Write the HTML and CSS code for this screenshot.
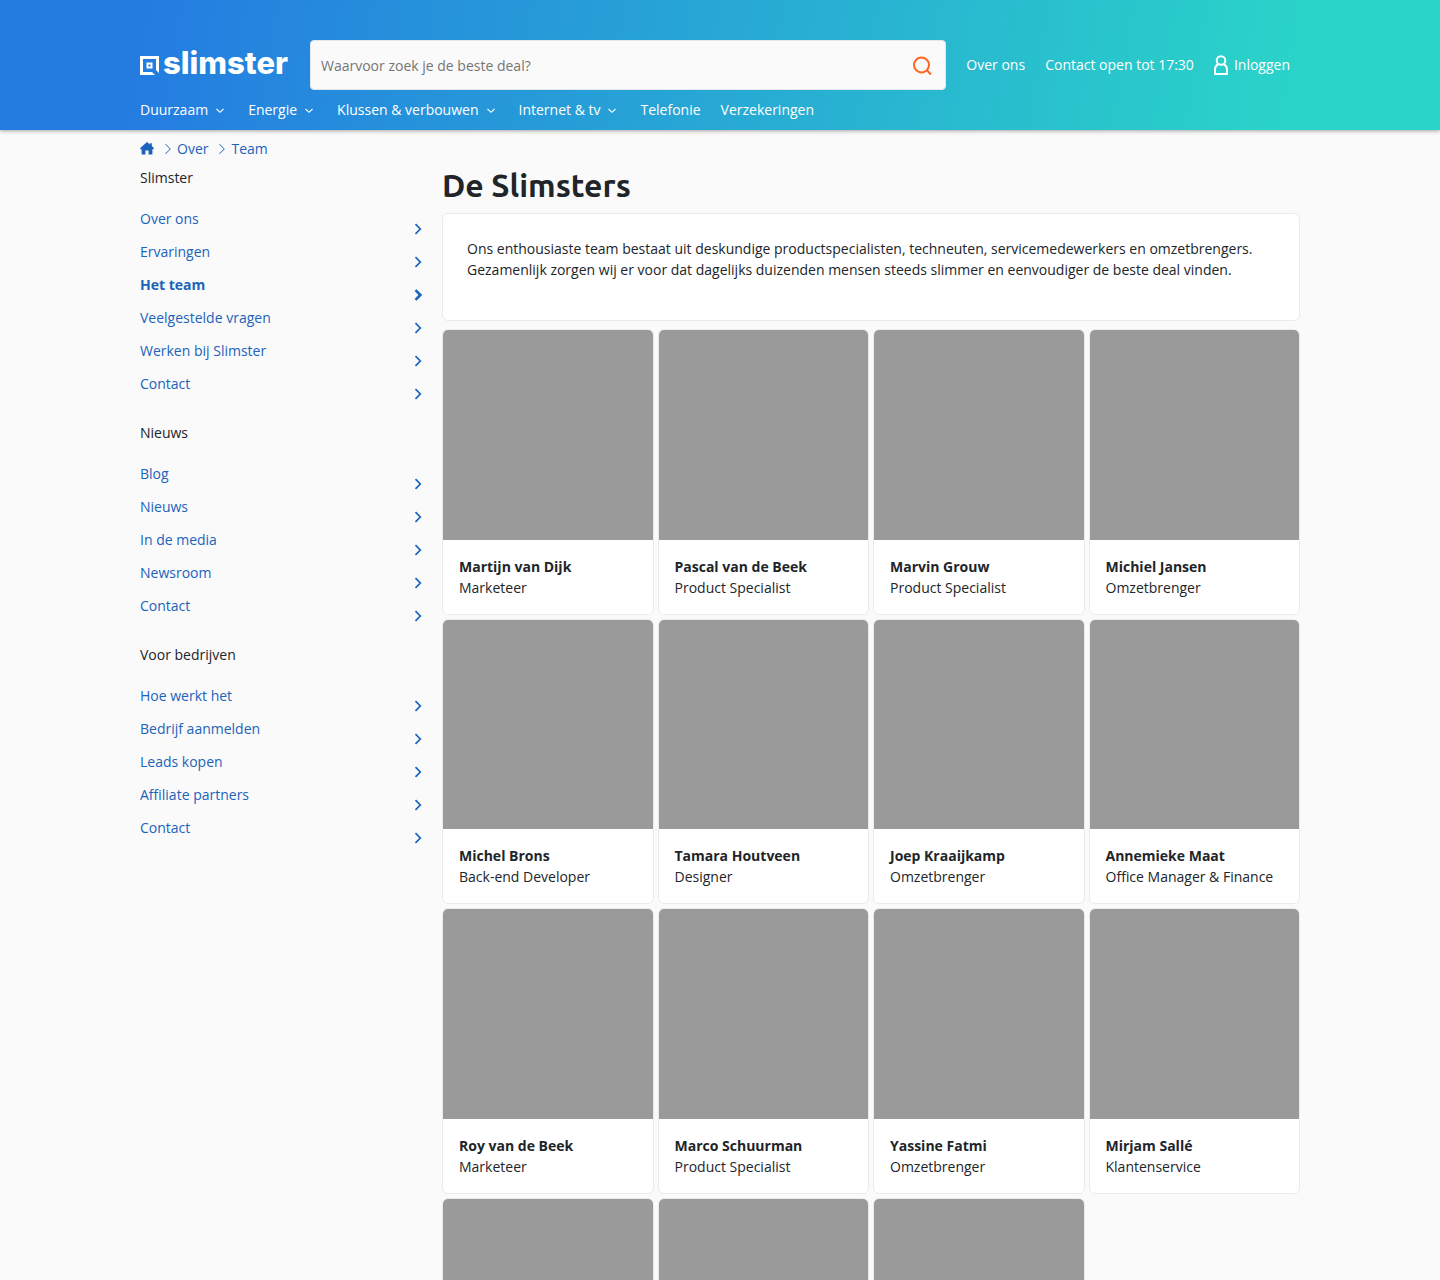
FILE: index.html
```html
<!DOCTYPE html>
<html lang="nl">
<head>
<meta charset="utf-8">
<meta name="viewport" content="width=device-width, initial-scale=1">
<title>De Slimsters</title>
<link rel="stylesheet" href="styles.css">
</head>
<body>
<svg class="sprite" aria-hidden="true">
  <symbol id="down" viewBox="0 0 8 8"><path d="M.5 2 4 5.300l3.500-3.300" fill="none" stroke="currentColor" stroke-width="1.100"/></symbol>
  <symbol id="right" viewBox="0 0 8 12"><path d="m1.500 1.200 4.800 4.800-4.800 4.800" fill="none" stroke="currentColor" stroke-width="var(--chevron-weight, 1.700)"/></symbol>
  <symbol id="crumb" viewBox="0 0 8 12"><path d="m1.500 1.200 4.800 4.800-4.800 4.800" fill="none" stroke="currentColor" stroke-width="1"/></symbol>
</svg>
<header class="header">
  <div class="container">
    <div class="topbar">
      <a class="logo" href="#" aria-label="Slimster">
        <svg class="logo-mark" viewBox="0 0 19 19" aria-hidden="true"><path fill="#fff" fill-rule="evenodd" d="M0 0h19v17l-3-3V3H3v13h9l3 3H0zM6.500 6.500h6v6h-6zM8.500 8.500v2h2v-2z"/></svg>
        <span class="logo-word">slimster</span>
      </a>
      <form class="search" role="search">
        <input class="search-input" type="search" placeholder="Waarvoor zoek je de beste deal?" aria-label="Zoeken">
        <button class="search-button" type="button" aria-label="Zoek">
          <svg viewBox="-.5 -1 20 20" width="20" height="20"><circle cx="9" cy="9" r="7.500" fill="none" stroke="#ff6420" stroke-width="2"/><path d="m14.300 14.300 4.200 4.200" stroke="#ff6420" stroke-width="2"/></svg>
        </button>
      </form>
      <nav class="user-links" aria-label="Service">
        <a href="#">Over ons</a>
        <a href="#">Contact open tot 17:30</a>
        <a class="login" href="#"><svg viewBox="0 0 14 20" width="14" height="20" aria-hidden="true"><g fill="none" stroke="#fff" stroke-width="2"><circle cx="7" cy="5.500" r="4.300"/><path d="M4 9.400C2 10.500 1 12.300 1 14.500V19h12v-4.500c0-2.200-1-4-3-5.100"/></g></svg>Inloggen</a>
      </nav>
    </div>
    <nav class="menu" aria-label="Hoofdmenu">
      <a href="#">Duurzaam<svg><use href="#down"/></svg></a>
      <a href="#">Energie<svg><use href="#down"/></svg></a>
      <a href="#">Klussen &amp; verbouwen<svg><use href="#down"/></svg></a>
      <a href="#">Internet &amp; tv<svg><use href="#down"/></svg></a>
      <a href="#">Telefonie</a>
      <a href="#">Verzekeringen</a>
    </nav>
  </div>
</header>
<div class="container">
  <nav class="breadcrumb" aria-label="Kruimelpad">
    <a href="#" aria-label="Home"><svg class="home" viewBox="0 0 14 14"><path fill="currentColor" d="M7 0 9.800 2.400V1.300h2v2.800L14 6.300l-.7.900H12.400V12.500H8.600V8.500H5.400v4H1.600V7.200H.7L0 6.300z"/></svg></a>
    <svg class="crumb-arrow"><use href="#crumb"/></svg>
    <a href="#">Over</a>
    <svg class="crumb-arrow"><use href="#crumb"/></svg>
    <a href="#">Team</a>
  </nav>
  <div class="layout">
    <aside class="sidebar">
      <section>
        <h2>Slimster</h2>
        <ul>
          <li><a href="#">Over ons<svg><use href="#right"/></svg></a></li>
          <li><a href="#">Ervaringen<svg><use href="#right"/></svg></a></li>
          <li><a class="active" href="#" aria-current="page">Het team<svg><use href="#right"/></svg></a></li>
          <li><a href="#">Veelgestelde vragen<svg><use href="#right"/></svg></a></li>
          <li><a href="#">Werken bij Slimster<svg><use href="#right"/></svg></a></li>
          <li><a href="#">Contact<svg><use href="#right"/></svg></a></li>
        </ul>
      </section>
      <section>
        <h2>Nieuws</h2>
        <ul>
          <li><a href="#">Blog<svg><use href="#right"/></svg></a></li>
          <li><a href="#">Nieuws<svg><use href="#right"/></svg></a></li>
          <li><a href="#">In de media<svg><use href="#right"/></svg></a></li>
          <li><a href="#">Newsroom<svg><use href="#right"/></svg></a></li>
          <li><a href="#">Contact<svg><use href="#right"/></svg></a></li>
        </ul>
      </section>
      <section>
        <h2>Voor bedrijven</h2>
        <ul>
          <li><a href="#">Hoe werkt het<svg><use href="#right"/></svg></a></li>
          <li><a href="#">Bedrijf aanmelden<svg><use href="#right"/></svg></a></li>
          <li><a href="#">Leads kopen<svg><use href="#right"/></svg></a></li>
          <li><a href="#">Affiliate partners<svg><use href="#right"/></svg></a></li>
          <li><a href="#">Contact<svg><use href="#right"/></svg></a></li>
        </ul>
      </section>
    </aside>
    <main>
      <h1>De Slimsters</h1>
      <div class="intro"><p>Ons enthousiaste team bestaat uit deskundige productspecialisten, techneuten, servicemedewerkers en omzetbrengers. Gezamenlijk zorgen wij er voor dat dagelijks duizenden mensen steeds slimmer en eenvoudiger de beste deal vinden.</p></div>
      <div class="team">
        <article class="card"><div class="photo"></div><div class="info"><h3>Martijn van Dijk</h3><p>Marketeer</p></div></article>
        <article class="card"><div class="photo"></div><div class="info"><h3>Pascal van de Beek</h3><p>Product Specialist</p></div></article>
        <article class="card"><div class="photo"></div><div class="info"><h3>Marvin Grouw</h3><p>Product Specialist</p></div></article>
        <article class="card"><div class="photo"></div><div class="info"><h3>Michiel Jansen</h3><p>Omzetbrenger</p></div></article>
        <article class="card"><div class="photo"></div><div class="info"><h3>Michel Brons</h3><p>Back-end Developer</p></div></article>
        <article class="card"><div class="photo"></div><div class="info"><h3>Tamara Houtveen</h3><p>Designer</p></div></article>
        <article class="card"><div class="photo"></div><div class="info"><h3>Joep Kraaijkamp</h3><p>Omzetbrenger</p></div></article>
        <article class="card"><div class="photo"></div><div class="info"><h3>Annemieke Maat</h3><p>Office Manager &amp; Finance</p></div></article>
        <article class="card"><div class="photo"></div><div class="info"><h3>Roy van de Beek</h3><p>Marketeer</p></div></article>
        <article class="card"><div class="photo"></div><div class="info"><h3>Marco Schuurman</h3><p>Product Specialist</p></div></article>
        <article class="card"><div class="photo"></div><div class="info"><h3>Yassine Fatmi</h3><p>Omzetbrenger</p></div></article>
        <article class="card"><div class="photo"></div><div class="info"><h3>Mirjam Sallé</h3><p>Klantenservice</p></div></article>
        <article class="card"><div class="photo"></div></article>
        <article class="card"><div class="photo"></div></article>
        <article class="card"><div class="photo"></div></article>
      </div>
    </main>
  </div>
</div>
</body>
</html>
```
FILE: styles.css
```css
* { box-sizing: border-box; }
body {
  margin: 0;
  background: #fafafa;
  color: #212529;
  font: 14px/21px "Open Sans", "Noto Sans", sans-serif;
}
h1, h2, h3, p, ul { margin: 0; padding: 0; }
ul { list-style: none; }
a { color: #1b63bb; text-decoration: none; }
.sprite { display: none; }
.container { max-width: 1160px; margin: 0 auto; }

.header {
  padding-top: 40px;
  background: linear-gradient(100deg, #247ce1 10%, #2ad4c8 90%);
  box-shadow: 0 1px 4px rgba(0, 0, 0, .35);
}
.header a { color: #fff; }
.topbar { display: flex; align-items: center; gap: 20px; padding-right: 10px; }
.logo { display: flex; align-items: flex-end; gap: 4px; width: 150px; height: 20px; }
.logo-mark { flex: none; width: 19px; height: 19px; }
.logo-word { font: 800 31px/24px "Inter", sans-serif; }
.search {
  flex: 1;
  display: flex;
  height: 50px;
  border: 1px solid #e4e7ea;
  border-radius: 4px;
  background: #fafafa;
}
.search-input {
  flex: 1;
  min-width: 0;
  padding: 0 10px;
  border: 0;
  background: transparent;
  color: #212529;
  font: inherit;
}
.search-input::placeholder { color: #757575; }
.search-button { display: flex; align-items: center; padding: 0 13px; border: 0; background: transparent; }
.user-links { display: flex; gap: 20px; padding-bottom: 2px; white-space: nowrap; }
.login { display: flex; align-items: flex-end; gap: 6px; }
.menu { display: flex; gap: 20px; height: 40px; padding-bottom: 2px; align-items: center; }
.menu svg { width: 8px; height: 8px; margin: 0 4px 0 8px; }

.breadcrumb { display: flex; align-items: center; padding: 8px 0; }
.breadcrumb a { display: flex; }
.home { width: 14px; height: 14px; }
.crumb-arrow { width: 8px; height: 12px; margin: 0 5px 0 10px; color: #1b63bb; }

.layout { display: grid; grid-template-columns: 282px minmax(0, 1fr); gap: 20px; }
.sidebar h2 { margin-bottom: 20px; font-size: 14px; font-weight: 400; line-height: 21px; }
.sidebar ul { margin-bottom: 16px; }
.sidebar a { display: flex; justify-content: space-between; align-items: flex-start; height: 33px; }
.sidebar svg { width: 8px; height: 12px; margin-top: 15px; }
.sidebar .active { font-weight: 700; --chevron-weight: 2.6; }

h1 { margin-bottom: 10px; font: 700 32px/36px "Ubuntu", "Lato", sans-serif; }
.intro { padding: 24px 24px 40px; border: 1px solid #e9ecef; border-radius: 6px; background: #fff; }
.team { display: grid; grid-template-columns: repeat(4, minmax(0, 1fr)); gap: 4px; margin-top: 8px; }
.card { overflow: hidden; border: 1px solid #e9ecef; border-radius: 6px; background: #fff; }
.photo { aspect-ratio: 1; background: #9a9a9a; }
.info { padding: 16px; }
.info h3 { font-size: 14px; font-weight: 700; line-height: 21px; }
```
